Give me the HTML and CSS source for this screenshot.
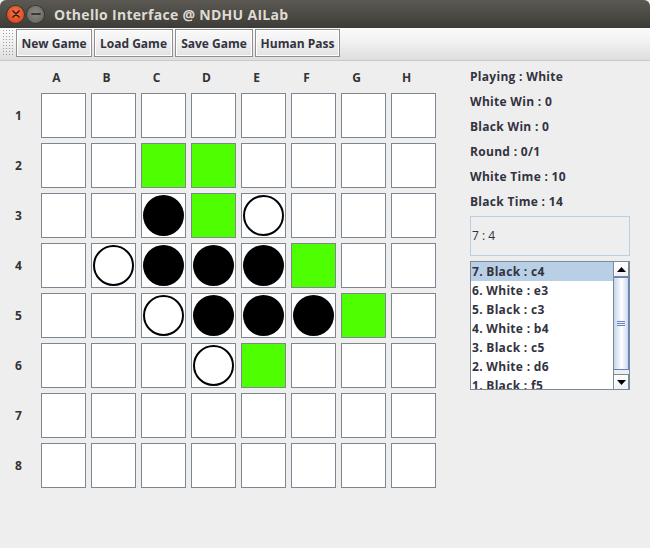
FILE: index.html
```html
<!DOCTYPE html>
<html>
<head>
<meta charset="utf-8">
<link rel="stylesheet" href="styles.css">
</head>
<body>
<div class="window">
  <div class="titlebar">
    <span class="wbtn close">
      <svg width="8" height="8" viewBox="0 0 8 8"><path d="M1 1L7 7M7 1L1 7" stroke="#3a1a10" stroke-width="1.6" stroke-linecap="round"/></svg>
    </span>
    <span class="wbtn minimize">
      <svg width="10" height="4" viewBox="0 0 10 4"><path d="M1 2H9" stroke="#3b3a36" stroke-width="1.8" stroke-linecap="round"/></svg>
    </span>
    <span class="title">Othello Interface @ NDHU AILab</span>
  </div>
  <div class="toolbar">
    <span class="grip"></span>
    <button class="tbtn btn-new">New Game</button>
    <button class="tbtn btn-load">Load Game</button>
    <button class="tbtn btn-save">Save Game</button>
    <button class="tbtn btn-pass">Human Pass</button>
  </div>
  <div class="main">
    <div class="board-area">
      <div class="col-heads">
        <span>A</span><span>B</span><span>C</span><span>D</span><span>E</span><span>F</span><span>G</span><span>H</span>
      </div>
      <div class="board">
        <span class="rl">1</span>
        <div class="cell"></div><div class="cell"></div><div class="cell"></div><div class="cell"></div><div class="cell"></div><div class="cell"></div><div class="cell"></div><div class="cell"></div>
        <span class="rl">2</span>
        <div class="cell"></div><div class="cell"></div><div class="cell hint"></div><div class="cell hint"></div><div class="cell"></div><div class="cell"></div><div class="cell"></div><div class="cell"></div>
        <span class="rl">3</span>
        <div class="cell"></div><div class="cell"></div><div class="cell"><i class="disc black"></i></div><div class="cell hint"></div><div class="cell"><i class="disc white"></i></div><div class="cell"></div><div class="cell"></div><div class="cell"></div>
        <span class="rl">4</span>
        <div class="cell"></div><div class="cell"><i class="disc white"></i></div><div class="cell"><i class="disc black"></i></div><div class="cell"><i class="disc black"></i></div><div class="cell"><i class="disc black"></i></div><div class="cell hint"></div><div class="cell"></div><div class="cell"></div>
        <span class="rl">5</span>
        <div class="cell"></div><div class="cell"></div><div class="cell"><i class="disc white"></i></div><div class="cell"><i class="disc black"></i></div><div class="cell"><i class="disc black"></i></div><div class="cell"><i class="disc black"></i></div><div class="cell hint"></div><div class="cell"></div>
        <span class="rl">6</span>
        <div class="cell"></div><div class="cell"></div><div class="cell"></div><div class="cell"><i class="disc white"></i></div><div class="cell hint"></div><div class="cell"></div><div class="cell"></div><div class="cell"></div>
        <span class="rl">7</span>
        <div class="cell"></div><div class="cell"></div><div class="cell"></div><div class="cell"></div><div class="cell"></div><div class="cell"></div><div class="cell"></div><div class="cell"></div>
        <span class="rl">8</span>
        <div class="cell"></div><div class="cell"></div><div class="cell"></div><div class="cell"></div><div class="cell"></div><div class="cell"></div><div class="cell"></div><div class="cell"></div>
      </div>
    </div>
    <div class="side">
      <div class="info">Playing : White</div>
      <div class="info">White Win : 0</div>
      <div class="info">Black Win : 0</div>
      <div class="info">Round : 0/1</div>
      <div class="info">White Time : 10</div>
      <div class="info">Black Time : 14</div>
      <div class="score">7 : 4</div>
      <div class="history">
        <ul class="moves">
          <li class="sel">7. Black : c4</li>
          <li>6. White : e3</li>
          <li>5. Black : c3</li>
          <li>4. White : b4</li>
          <li>3. Black : c5</li>
          <li>2. White : d6</li>
          <li>1. Black : f5</li>
        </ul>
        <div class="scrollbar">
          <div class="sb-btn"><svg width="9" height="5" viewBox="0 0 9 5"><path d="M0 5L4.5 0L9 5Z" fill="#000"/></svg></div>
          <div class="sb-track">
            <div class="sb-thumb"><span class="grip-lines"></span></div>
          </div>
          <div class="sb-btn"><svg width="9" height="5" viewBox="0 0 9 5"><path d="M0 0L9 0L4.5 5Z" fill="#000"/></svg></div>
        </div>
      </div>
    </div>
  </div>
</div>
</body>
</html>
```
FILE: styles.css
```css
* { box-sizing: border-box; }
html, body { margin: 0; padding: 0; }
body {
  width: 650px;
  height: 548px;
  background: #eeeeee;
  font-family: "Open Sans", "DejaVu Sans", sans-serif;
  color: #333333;
  overflow: hidden;
}
.window { width: 650px; height: 548px; background: #eeeeee; }

.titlebar {
  height: 28px;
  background: linear-gradient(#5b5952, #4a4843 60%, #3c3b37);
  border-radius: 6px 6px 0 0;
  display: flex;
  align-items: center;
  padding-left: 7px;
}
.wbtn {
  width: 17px; height: 17px;
  border-radius: 50%;
  display: flex; align-items: center; justify-content: center;
  margin-right: 3px;
}
.close { background: radial-gradient(circle at 50% 40%, #f37a4e, #e0491f 70%, #b83813); box-shadow: 0 0 0 1px #3a3834; }
.minimize { background: radial-gradient(circle at 50% 40%, #8a8984, #6d6c67 70%, #5a5954); box-shadow: 0 0 0 1px #3a3834; }
.title {
  margin-left: 7px;
  color: #dfdbd2;
  font-weight: bold;
  font-size: 14px;
  font-family: "Open Sans", "DejaVu Sans", sans-serif;
  letter-spacing: 0.3px;
}

.toolbar {
  height: 33px;
  background: linear-gradient(#fbfbfb, #f2f2f2 40%, #dedede);
  border-bottom: 1px solid #c9c9c9;
  display: flex;
  align-items: flex-start;
  padding-top: 1px;
  padding-left: 2px;
}
.grip {
  width: 12px; height: 28px;
  margin-right: 2px;
  background-image: radial-gradient(circle, #9d9d9d 0.7px, transparent 0.9px);
  background-size: 3px 3px;
}
.tbtn {
  height: 28px;
  margin-right: 2px;
  border: 1px solid #8f8f8f;
  box-shadow: inset 0 0 0 1px #ffffff;
  background: transparent;
  font-family: "Open Sans", "DejaVu Sans", sans-serif;
  font-weight: bold;
  font-size: 12px;
  color: #333340;
  padding: 0;
  text-align: center;
}
.btn-new { width: 76px; }
.btn-load { width: 79px; }
.btn-save { width: 78px; }
.btn-pass { width: 85px; }

.main { display: flex; align-items: flex-start; }

.col-heads {
  display: grid;
  grid-template-columns: repeat(8, 45px);
  column-gap: 5px;
  padding-left: 34px;
  height: 32px;
  align-items: center;
  font-weight: bold;
  font-size: 12px;
}
.col-heads span { text-align: center; }

.board {
  display: grid;
  grid-template-columns: 35px repeat(8, 45px);
  grid-auto-rows: 45px;
  column-gap: 5px;
  row-gap: 5px;
  padding-left: 1px;
}
.rl {
  display: flex; align-items: center; justify-content: center;
  font-weight: bold; font-size: 12px;
}
.cell {
  background: #ffffff;
  border: 1px solid #7d8792;
  display: flex; align-items: center; justify-content: center;
}
.cell.hint { background: #4dff00; }
.disc {
  display: block;
  width: 41px; height: 41px;
  border-radius: 50%;
}
.disc.black { background: #000000; }
.disc.white { background: #ffffff; border: 2px solid #000000; }

.side {
  margin-left: 34px;
  width: 160px;
  padding-top: 3px;
}
.info {
  height: 25px;
  line-height: 25px;
  font-weight: bold;
  font-size: 12px;
  letter-spacing: 0.3px;
  color: #333340;
  white-space: nowrap;
}
.score {
  margin-top: 2px;
  height: 40px;
  border: 1px solid #b8cfe5;
  font-size: 12px;
  line-height: 38px;
  padding-left: 1px;
  color: #333333;
}
.history {
  margin-top: 5px;
  height: 129px;
  border: 1px solid #7a8a99;
  background: #ffffff;
  display: flex;
  overflow: hidden;
}
.moves {
  list-style: none;
  margin: 0; padding: 0;
  flex: 1;
  overflow: hidden;
}
.moves li {
  height: 19px;
  line-height: 19px;
  padding-left: 1px;
  font-weight: bold;
  font-size: 12px;
  letter-spacing: 0.3px;
  color: #333340;
  white-space: nowrap;
}
.moves li.sel { background: #b8cfe5; }
.scrollbar {
  width: 16px;
  display: flex;
  flex-direction: column;
  border-left: 1px solid #7a8a99;
  background: #eeeeee;
}
.sb-btn {
  height: 15px;
  background: linear-gradient(#ffffff, #eef0f3);
  border: 1px solid #7a8a99;
  border-left: none;
  box-shadow: inset 1px 1px 0 #ffffff;
  display: flex; align-items: center; justify-content: center;
}
.sb-btn:first-child { border-top: none; }
.sb-btn:last-child { border-bottom: none; }
.sb-track { flex: 1; display: flex; flex-direction: column; padding-bottom: 4px; }
.sb-thumb {
  flex: 1;
  border: 1px solid #6382bf;
  border-left: none;
  background: linear-gradient(90deg, #c4d6ec, #eef4fb 40%, #ffffff 55%, #c8d9ee);
  display: flex; align-items: center; justify-content: center;
}
.grip-lines {
  width: 8px; height: 5px;
  border-top: 1px solid #6382bf;
  border-bottom: 1px solid #6382bf;
  background: linear-gradient(#6382bf, #6382bf) center / 100% 1px no-repeat;
}
```
